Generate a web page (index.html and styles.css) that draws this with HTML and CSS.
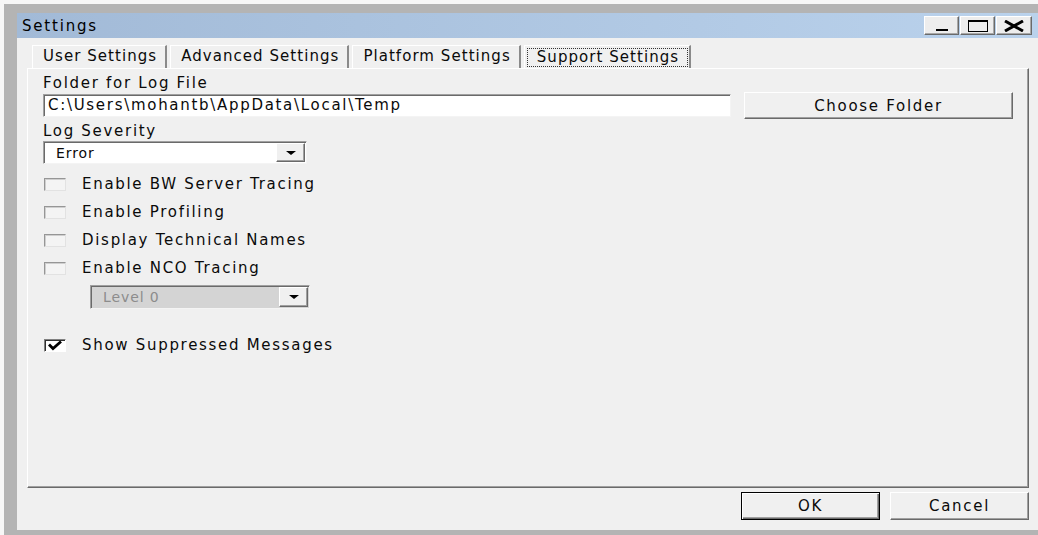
FILE: index.html
```html
<!DOCTYPE html>
<html>
<head>
<meta charset="utf-8">
<title>Settings</title>
<link rel="stylesheet" href="styles.css">
</head>
<body>
<div class="frame">
  <div class="window">
    <div class="titlebar">
      <span class="title">Settings</span>
      <div class="caption-buttons">
        <div class="cap-btn cap-min">
          <svg width="12" height="2" viewBox="0 0 12 2"><rect width="12" height="2" fill="#000"/></svg>
        </div>
        <div class="cap-btn cap-max">
          <svg width="20" height="12" viewBox="0 0 20 12"><rect x="0.5" y="1" width="19" height="10.5" fill="none" stroke="#000" stroke-width="1"/><rect x="0" y="0" width="20" height="2" fill="#000"/></svg>
        </div>
        <div class="cap-btn cap-close">
          <svg width="24" height="12" viewBox="0 0 24 12"><path d="M3 1 L21 11 M21 1 L3 11" stroke="#000" stroke-width="3" fill="none"/></svg>
        </div>
      </div>
    </div>

    <div class="content">
      <div class="tabs">
        <div class="tab">User Settings</div>
        <div class="tab">Advanced Settings</div>
        <div class="tab">Platform Settings</div>
        <div class="tab tab-active"><span class="focus-ring">Support Settings</span></div>
      </div>

      <div class="panel">
        <div class="label">Folder for Log File</div>
        <div class="folder-row">
          <div class="textbox">C:\Users\mohantb\AppData\Local\Temp</div>
          <div class="btn btn-choose">Choose Folder</div>
        </div>

        <div class="label label-gap">Log Severity</div>
        <div class="combo combo-severity">
          <span class="combo-text">Error</span>
          <span class="combo-arrow"><svg width="10" height="4" viewBox="0 0 10 4"><path d="M0 0 H10 L5 4 Z" fill="#000"/></svg></span>
        </div>

        <div class="check-list">
          <div class="check-row"><span class="checkbox"></span><span>Enable BW Server Tracing</span></div>
          <div class="check-row"><span class="checkbox"></span><span>Enable Profiling</span></div>
          <div class="check-row"><span class="checkbox"></span><span>Display Technical Names</span></div>
          <div class="check-row"><span class="checkbox"></span><span>Enable NCO Tracing</span></div>
        </div>

        <div class="combo combo-level is-disabled">
          <span class="combo-text">Level 0</span>
          <span class="combo-arrow"><svg width="10" height="4" viewBox="0 0 10 4"><path d="M0 0 H10 L5 4 Z" fill="#000"/></svg></span>
        </div>

        <div class="check-row check-suppressed">
          <span class="checkbox is-checked"><svg width="20" height="11" viewBox="0 0 20 11"><path d="M4 4.5 L8 8.5 L16 1.5" stroke="#000" stroke-width="2.8" fill="none"/></svg></span>
          <span>Show Suppressed Messages</span>
        </div>
      </div>

      <div class="actions">
        <div class="btn btn-ok">OK</div>
        <div class="btn btn-cancel">Cancel</div>
      </div>
    </div>
  </div>
</div>
</body>
</html>
```

FILE: styles.css
```css
* {
  box-sizing: border-box;
}

html,
body {
  margin: 0;
  height: 100%;
}

body {
  background: #f7f7f7;
  font-family: "DejaVu Sans", "Liberation Sans", sans-serif;
  font-size: 15px;
  letter-spacing: 1.7px;
  color: #0a0a0a;
  overflow: hidden;
}

/* outer desktop frame around the dialog */
.frame {
  margin: 4px 0 0 4px;
  height: 531px;
  padding: 9px 0 5px 13px;
  background: #b4b4b4;
}

.window {
  height: 100%;
  display: flex;
  flex-direction: column;
  background: #f0f0f0;
}

/* title bar */
.titlebar {
  flex: none;
  height: 25px;
  display: flex;
  justify-content: space-between;
  align-items: center;
  padding: 0 6px 0 5px;
  background: linear-gradient(to right, #a2bad7, #bad2ec);
}

.title {
  line-height: 18px;
  letter-spacing: 1.8px;
  color: #000;
}

.caption-buttons {
  align-self: flex-start;
  margin-top: 3px;
  display: flex;
  gap: 1px;
}

.cap-btn {
  width: 35px;
  height: 19px;
  display: flex;
  justify-content: center;
  background: #ededed;
  border: 1px solid;
  border-color: #fff #6a6a6a #6a6a6a #fff;
  box-shadow: inset -1px -1px 0 #a8a8a8;
}

.cap-min {
  align-items: flex-end;
  padding-bottom: 3px;
}

.cap-max {
  align-items: flex-start;
  padding-top: 3px;
}

.cap-close {
  align-items: center;
  width: 36px;
}

/* dialog body */
.content {
  flex: 1;
  min-height: 0;
  display: flex;
  flex-direction: column;
  padding: 7px 9px 10px 10px;
}

.tabs {
  flex: none;
  height: 23px;
  display: flex;
  gap: 3px;
  margin-left: 5px;
}

.tab {
  padding: 0 8px 0 10px;
  line-height: 21px;
  letter-spacing: 1.05px;
  border-top: 1px solid #fff;
  border-left: 1px solid #fff;
  border-right: 2px solid #8a8a8a;
}

.tab-active {
  padding: 0 1px 0 2px;
  display: flex;
  align-items: center;
}

.focus-ring {
  display: block;
  padding: 0 9px 0 10px;
  line-height: 19px;
  outline: 1px dotted #333;
  outline-offset: -1px;
}

.panel {
  flex: 1;
  display: flex;
  flex-direction: column;
  align-items: flex-start;
  padding: 5px 15px 0 15px;
  border-top: 1px solid #fff;
  border-left: 1px solid #fff;
  border-right: 1px solid #6a6a6a;
  border-bottom: 1px solid #6a6a6a;
  box-shadow: inset -1px -1px 0 #a0a0a0;
}

.label {
  line-height: 18px;
}

.label-gap {
  margin-top: 3px;
}

.folder-row {
  align-self: stretch;
  height: 27px;
  display: flex;
  align-items: center;
  gap: 13px;
}

.textbox {
  flex: 1;
  height: 23px;
  padding-left: 4px;
  line-height: 20px;
  background: #fff;
  border: 1px solid;
  border-color: #a0a0a0 #f4f4f4 #f4f4f4 #a0a0a0;
  box-shadow: inset 1px 1px 0 #6a6a6a;
  white-space: nowrap;
  overflow: hidden;
}

/* push buttons */
.btn {
  display: flex;
  justify-content: center;
  align-items: center;
  height: 28px;
  background: #f0f0f0;
  border: 1px solid;
  border-color: #fff #6a6a6a #6a6a6a #fff;
  box-shadow: inset -1px -1px 0 #a0a0a0;
}

.btn-choose {
  width: 269px;
  height: 27px;
}

/* drop-down lists */
.combo {
  display: flex;
  align-items: center;
  justify-content: space-between;
  background: #fff;
  border: 1px solid;
  border-color: #a0a0a0 #f4f4f4 #f4f4f4 #a0a0a0;
  box-shadow: inset 1px 1px 0 #6a6a6a;
  padding: 1px 1px 1px 2px;
  font-size: 14px;
  letter-spacing: 0.9px;
}

.combo-text {
  padding-left: 10px;
}

.combo-arrow {
  width: 29px;
  align-self: stretch;
  display: flex;
  align-items: center;
  justify-content: center;
  background: #f0f0f0;
  border: 1px solid;
  border-color: #fff #6a6a6a #6a6a6a #fff;
  box-shadow: inset -1px -1px 0 #a0a0a0;
}

.combo-severity {
  width: 264px;
  height: 23px;
  margin-top: 1px;
}

.combo-level {
  width: 220px;
  height: 24px;
  margin: 3px 0 0 47px;
}

.combo.is-disabled {
  background: #d4d4d4;
  color: #8c8c8c;
}

/* check boxes */
.check-list {
  margin-top: 6px;
  display: flex;
  flex-direction: column;
}

.check-row {
  height: 28px;
  display: flex;
  align-items: center;
}

.checkbox {
  width: 22px;
  height: 13px;
  margin: 0 16px 0 1px;
  display: flex;
  align-items: center;
  justify-content: center;
  background: #f4f4f4;
  border: 1px solid;
  border-color: #969696 #e2e2e2 #e2e2e2 #969696;
  box-shadow: inset 1px 1px 0 #cfcfcf;
}

.checkbox.is-checked {
  background: #fff;
  border-color: #808080 #fff #fff #808080;
  box-shadow: inset 1px 1px 0 #303030;
}

.check-suppressed {
  margin-top: 22px;
}

/* dialog buttons */
.actions {
  flex: none;
  margin-top: 4px;
  display: flex;
  justify-content: flex-end;
  gap: 10px;
}

.btn-ok,
.btn-cancel {
  width: 139px;
}

.btn-ok {
  border: 1px solid #000;
  box-shadow: inset 1px 1px 0 #fff, inset -1px -1px 0 #6a6a6a, inset -2px -2px 0 #a0a0a0;
}
```
